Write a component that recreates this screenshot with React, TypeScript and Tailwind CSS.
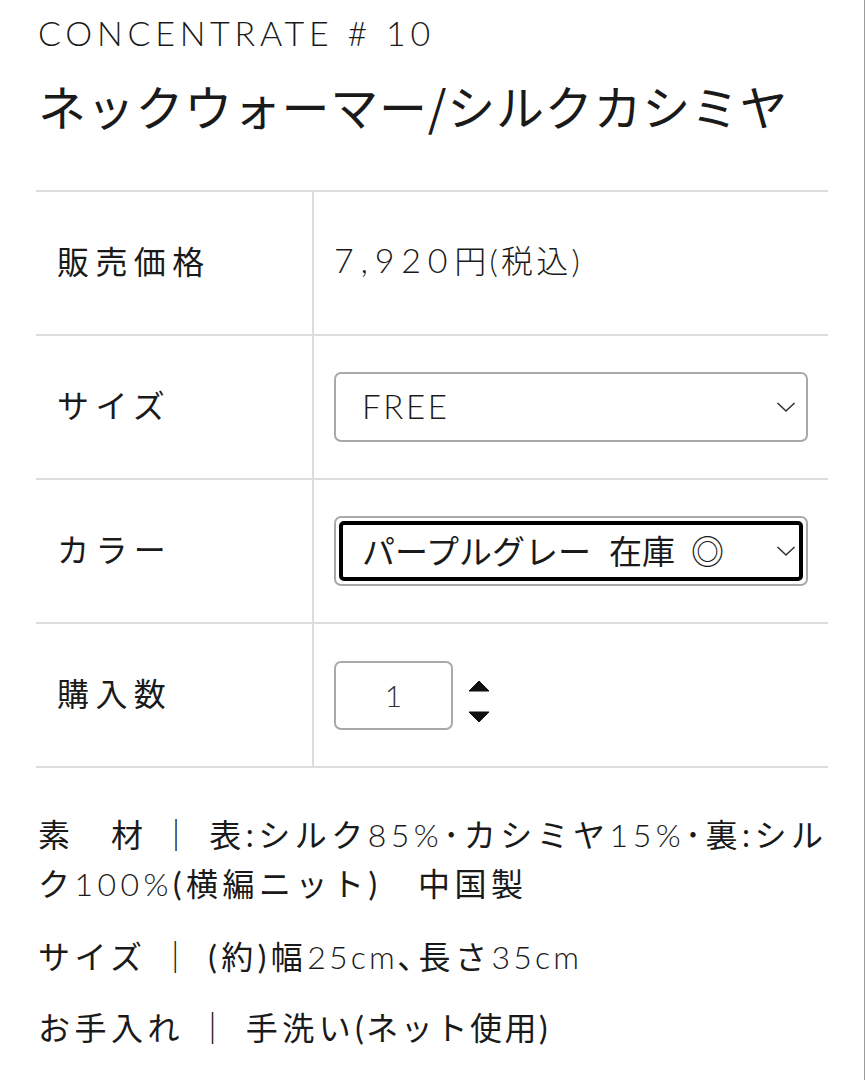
const rows = ["販売価格", "サイズ", "カラー", "購入数"];

function Chevron() {
  return (
    <svg width="20" height="12" viewBox="0 0 20 12" className="absolute right-[10px] top-1/2 -translate-y-1/2">
      <path d="M1.5 2 L10 10 L18.5 2" fill="none" stroke="#333" strokeWidth="1.6" />
    </svg>
  );
}

function Spinner() {
  return (
    <div className="flex flex-col gap-[19px] ml-[15px] mt-[12px]">
      <svg width="22" height="12" viewBox="0 0 22 12">
        <path d="M11 1 L21 11 L1 11 Z" fill="#111" strokeLinejoin="round" stroke="#111" strokeWidth="1" />
      </svg>
      <svg width="22" height="12" viewBox="0 0 22 12">
        <path d="M1 1 L21 1 L11 11 Z" fill="#111" strokeLinejoin="round" stroke="#111" strokeWidth="1" />
      </svg>
    </div>
  );
}

export default function App() {
  return (
    <div className="min-h-screen w-full bg-white border-r border-[#9c9c9c] text-[#1a1a1a] font-['Lato','Noto_Sans_CJK_JP',sans-serif]">
      <div className="px-[36px]">
        <p className="pt-[16px] pl-[2px] text-[34px] font-light tracking-[0.14em] leading-none">
          CONCENTRATE # 10
        </p>
        <h1 className="mt-[31px] pl-[2px] text-[48px] leading-none tracking-[0.015em] font-['Noto_Sans_CJK_JP',sans-serif] font-normal">
          ネックウォーマー/シルクカシミヤ
        </h1>

        <div className="mt-[61px] border-t-2 border-[#dcdcdc]">
          {rows.map((label, i) => (
            <div key={label} className="grid grid-cols-[278px_1fr] h-[144px] border-b-2 border-[#dcdcdc]">
              <div className="flex items-center pl-[21px] pb-[7px] border-r-2 border-[#dcdcdc] text-[32px] tracking-[0.2em] font-['Noto_Sans_CJK_JP',sans-serif]">
                {label}
              </div>
              <div className="flex items-center pl-[20px] pr-[20px]">
                {i === 0 && (
                  <span className="mb-[7px] text-[32px] font-light">
                    <span className="text-[34px] tracking-[0.2em]">7,920</span>
                    <span className="tracking-[0.1em]">円(税込)</span>
                  </span>
                )}
                {i === 1 && (
                  <div className="relative w-full h-[70px] rounded-[7px] border-2 border-[#a9a9a9] flex items-center pl-[26px]">
                    <span className="text-[33px] font-light tracking-[0.08em]">FREE</span>
                    <Chevron />
                  </div>
                )}
                {i === 2 && (
                  <div className="relative w-full h-[70px] rounded-[7px] border-2 border-[#a9a9a9] flex items-center pl-[26px]">
                    <div className="absolute inset-[3px] rounded-[5px] border-4 border-black" />
                    <span className="text-[33px] font-['Noto_Sans_CJK_JP',sans-serif] whitespace-nowrap">
                      パープルグレー<span className="ml-[18px]">在庫</span><span className="ml-[16px]">◎</span>
                    </span>
                    <Chevron />
                  </div>
                )}
                {i === 3 && (
                  <div className="flex items-center">
                    <div className="w-[119px] h-[69px] rounded-[7px] border-2 border-[#a9a9a9] flex items-center justify-center">
                      <span className="text-[30px] font-light text-[#333]">1</span>
                    </div>
                    <Spinner />
                  </div>
                )}
              </div>
            </div>
          ))}
        </div>

        <div className="mt-[42px] pl-[2px] text-[32px] leading-[49px] tracking-[0.14em]">
          <p className="whitespace-nowrap">
            素　材 ｜ 表:シルク<span className="font-light">85%</span>･カシミヤ<span className="font-light">15%</span>･裏:シル
            <br />
            ク<span className="font-light">100%</span>(横編ニット)　中国製
          </p>
          <p className="mt-[24px]">
            サイズ ｜ (約)幅<span className="font-light tracking-[0.1em]">25cm</span>､長さ<span className="font-light tracking-[0.1em]">35cm</span>
          </p>
          <p className="mt-[22px]">
            お手入れ ｜ 手洗い<span className="tracking-[0.08em]">(ネット使用)</span>
          </p>
        </div>
      </div>
    </div>
  );
}
